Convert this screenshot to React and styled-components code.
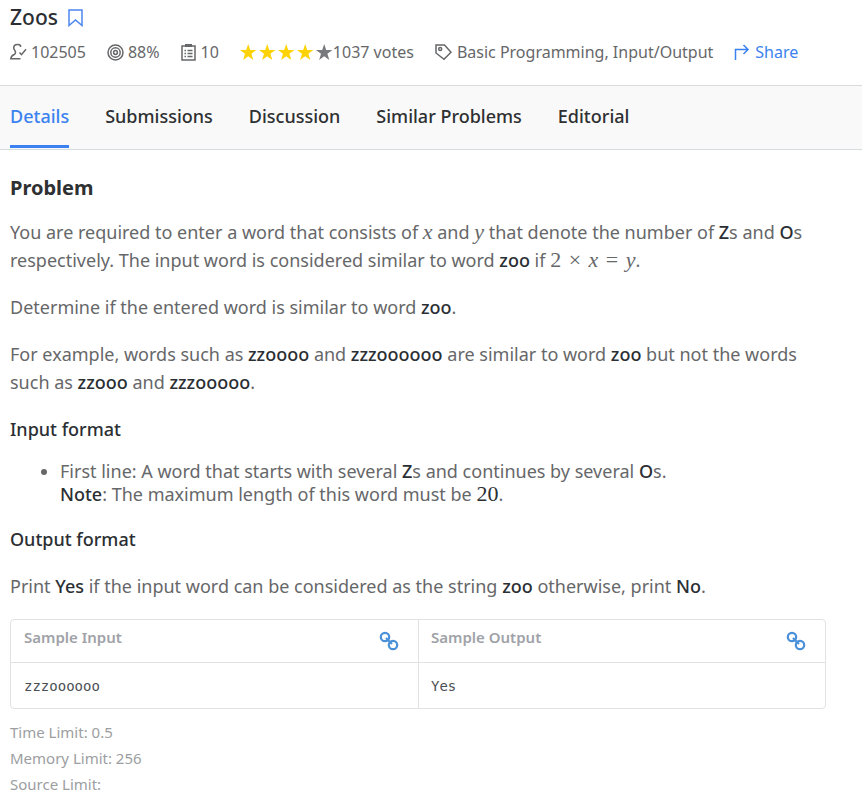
import React from "react";
import styled, { createGlobalStyle } from "styled-components";

const GlobalStyle = createGlobalStyle`
  * { box-sizing: border-box; }
  body {
    margin: 0;
    background: #fff;
    color: #666769;
    font-family: "Noto Sans", "Open Sans", sans-serif;
    font-size: 18px;
  }
`;

const Header = styled.header`
  padding: 4px 10px 21px;
`;

const TitleRow = styled.div`
  display: flex;
  align-items: center;
  gap: 10px;
`;

const Title = styled.h1`
  margin: 0;
  color: #2b2f33;
  font-size: 21px;
  line-height: 27px;
  font-weight: 500;
`;

const IconButton = styled.button`
  display: flex;
  padding: 0;
  border: 0;
  background: none;
  color: ${(p) => p.$color};
  cursor: pointer;
`;

const MetaRow = styled.div`
  display: flex;
  flex-wrap: wrap;
  align-items: center;
  column-gap: 21px;
  margin-top: 9px;
  font-size: 16px;
  line-height: 24px;
`;

const Meta = styled.span`
  display: flex;
  align-items: center;
  gap: ${(p) => p.$gap ?? 4}px;
`;

const ShareLink = styled.a`
  display: flex;
  align-items: center;
  gap: 5px;
  color: #3b82f0;
  text-decoration: none;
`;

const TabBar = styled.nav`
  display: flex;
  flex-wrap: wrap;
  gap: 36px;
  padding: 0 10px 1px;
  border-top: 1px solid #d9dadc;
  border-bottom: 1px solid #d3dde0;
  background: #f9f9f9;
`;

const Tab = styled.a`
  padding: 18px 0 17px;
  border-bottom: 3px solid ${(p) => (p.$active ? "#3b82f0" : "transparent")};
  color: ${(p) => (p.$active ? "#3b82f0" : "#2e3032")};
  font-size: 18px;
  line-height: 24px;
  font-weight: 500;
  text-decoration: none;
`;

const Content = styled.main`
  padding: 24px 36px 12px 10px;
`;

const Heading = styled.h2`
  margin: 0 0 16px;
  color: #2e3032;
  font-size: 20px;
  line-height: 28px;
  font-weight: 700;
`;

const SubHeading = styled.h3`
  margin: 0 0 19px;
  color: #2b2f33;
  font-size: 18px;
  line-height: 28px;
  font-weight: 500;
`;

const Paragraph = styled.p`
  margin: 0 0 19px;
  line-height: 28px;
`;

const Strong = styled.strong`
  color: #2b2f33;
  font-weight: 500;
`;

const MathText = styled.span`
  font-family: "Liberation Serif", serif;
  font-size: 22px;
  line-height: 20px;
  white-space: nowrap;
`;

const Operator = styled.span`
  margin: 0 2px;
`;

const Digits = styled(MathText)`
  color: #2b2f33;
`;

const List = styled.ul`
  margin: -2px 0 19px;
  padding-left: 50px;
  line-height: 23px;
`;

const SampleTable = styled.table`
  width: 100%;
  table-layout: fixed;
  border: 1px solid #e0e2e4;
  border-radius: 4px;
  border-collapse: separate;
  border-spacing: 0;
  text-align: left;
`;

const HeadCell = styled.th`
  height: 43px;
  padding: 0 19px 4px 13px;
  border-bottom: 1px solid #e0e2e4;
  color: #9fa2a8;
  font-size: 15px;
  line-height: 20px;
  font-weight: 600;
  & + & { padding-left: 12px; border-left: 1px solid #e0e2e4; }
`;

const HeadInner = styled.div`
  display: flex;
  align-items: flex-end;
  justify-content: space-between;
`;

const HeadLabel = styled.span`
  padding-bottom: 4px;
`;

const Cell = styled.td`
  height: 45px;
  padding: 0 13px;
  color: #4b4f54;
  font-family: "DejaVu Sans Mono", monospace;
  font-size: 14px;
  & + & { padding-left: 12px; border-left: 1px solid #e0e2e4; }
`;

const Limits = styled.div`
  margin-top: 10px;
  color: #9c9ea1;
  font-size: 15px;
  line-height: 26px;
`;

const Svg = ({ w, h, children, ...rest }) => (
  <svg width={w} height={h} viewBox={`0 0 ${w} ${h}`} fill="none" stroke="currentColor" strokeWidth="1.5" aria-hidden="true" {...rest}>
    {children}
  </svg>
);

const BookmarkIcon = () => (
  <Svg w={15} h={18}><path d="M1 1h13v15.5L7.500 11 1 16.500z" /></Svg>
);

const UserCheckIcon = () => (
  <Svg w={17} h={18}>
    <path d="M10.500 4V2.500C9.500 1 5.500 1 4.500 2.500 3.500 4 3.600 6 4.800 7.500c1.200 1.700.8 3.200-.6 4C2.500 12.200 1 13 .8 15.800h9.700M9.500 9.500l2 2.200 4.500-5.500" />
  </Svg>
);

const TargetIcon = () => (
  <Svg w={17} h={17}>
    <circle cx="8.500" cy="8.500" r="7.500" />
    <circle cx="8.500" cy="8.500" r="4.700" />
    <circle cx="8.500" cy="8.500" r="1.900" />
  </Svg>
);

const ClipboardIcon = () => (
  <Svg w={15} h={17}>
    <path d="M1 2h13v14H1z" />
    <path d="M4 1.500h7" strokeWidth="3" />
    <path d="M3.500 6.500h1.500M6.500 6.500h5M3.500 9.500h1.500M6.500 9.500h5M3.500 12.500h1.500M6.500 12.500h5" />
  </Svg>
);

const TagIcon = () => (
  <Svg w={17} h={17}>
    <path d="M1 1h8.500L16 8.200 9 15.300 1 9z" />
    <circle cx="5.200" cy="5" r="1.500" />
  </Svg>
);

const ShareIcon = () => (
  <Svg w={16} h={17}><path d="M1.500 16V5.500H14M9.500 1l4.500 4.500L9.500 10" /></Svg>
);

const LinkIcon = () => (
  <Svg w={20} h={20} strokeWidth="2.2">
    <circle cx="6" cy="6" r="4.200" />
    <circle cx="14" cy="14" r="4.200" />
    <path d="M7 7l6 6" />
  </Svg>
);

const Stars = ({ value }) => (
  <svg width="93" height="17" viewBox="0 0 93 17" role="img" aria-label={`${value} of 5 stars`}>
    {[0, 1, 2, 3, 4].map((i) => (
      <path
        key={i}
        transform={`translate(${i * 19} 0)`}
        fill={i < value ? "#fdd305" : "#77797c"}
        d="M8.200 0l2 6h6.200l-5 3.800 1.900 6.200-5.100-3.700L3.100 16 5 9.800 0 6h6.200z"
      />
    ))}
  </svg>
);

const tabs = ["Details", "Submissions", "Discussion", "Similar Problems", "Editorial"];

export default function App() {
  return (
    <>
      <GlobalStyle />
      <Header>
        <TitleRow>
          <Title>Zoos</Title>
          <IconButton $color="#4d86f0" aria-label="Bookmark"><BookmarkIcon /></IconButton>
        </TitleRow>
        <MetaRow>
          <Meta><UserCheckIcon />102505</Meta>
          <Meta><TargetIcon />88%</Meta>
          <Meta $gap={5}><ClipboardIcon />10</Meta>
          <Meta $gap={0}><Stars value={4} />1037 votes</Meta>
          <Meta $gap={5}><TagIcon />Basic Programming, Input/Output</Meta>
          <ShareLink href="#share"><ShareIcon />Share</ShareLink>
        </MetaRow>
      </Header>
      <TabBar>
        {tabs.map((name, i) => (
          <Tab key={name} href={`#tab-${i}`} $active={i === 0}>{name}</Tab>
        ))}
      </TabBar>
      <Content>
        <Heading>Problem</Heading>
        <Paragraph>
          You are required to enter a word that consists of <MathText><i>x</i></MathText> and{" "}
          <MathText><i>y</i></MathText> that denote the number of <Strong>Z</Strong>s and{" "}
          <Strong>O</Strong>s respectively. The input word is considered similar to word{" "}
          <Strong>zoo</Strong> if{" "}
          <MathText>2 <Operator>×</Operator> <i>x</i> <Operator>=</Operator> <i>y</i></MathText>.
        </Paragraph>
        <Paragraph>
          Determine if the entered word is similar to word <Strong>zoo</Strong>.
        </Paragraph>
        <Paragraph>
          For example, words such as <Strong>zzoooo</Strong> and <Strong>zzzoooooo</Strong> are similar to
          word <Strong>zoo</Strong> but not the words such as <Strong>zzooo</Strong> and{" "}
          <Strong>zzzooooo</Strong>.
        </Paragraph>
        <SubHeading>Input format</SubHeading>
        <List>
          <li>
            First line: A word that starts with several <Strong>Z</Strong>s and continues by several{" "}
            <Strong>O</Strong>s.
            <br />
            <Strong>Note</Strong>: The maximum length of this word must be <Digits>20</Digits>.
          </li>
        </List>
        <SubHeading>Output format</SubHeading>
        <Paragraph>
          Print <Strong>Yes</Strong> if the input word can be considered as the string{" "}
          <Strong>zoo</Strong> otherwise, print <Strong>No</Strong>.
        </Paragraph>
        <SampleTable>
          <thead>
            <tr>
              {["Sample Input", "Sample Output"].map((label) => (
                <HeadCell key={label} scope="col">
                  <HeadInner>
                    <HeadLabel>{label}</HeadLabel>
                    <IconButton $color="#4a90d9" aria-label={`Link to ${label}`}><LinkIcon /></IconButton>
                  </HeadInner>
                </HeadCell>
              ))}
            </tr>
          </thead>
          <tbody>
            <tr>
              <Cell>zzzoooooo</Cell>
              <Cell>Yes</Cell>
            </tr>
          </tbody>
        </SampleTable>
        <Limits>
          <div>Time Limit: 0.5</div>
          <div>Memory Limit: 256</div>
          <div>Source Limit:</div>
        </Limits>
      </Content>
    </>
  );
}
